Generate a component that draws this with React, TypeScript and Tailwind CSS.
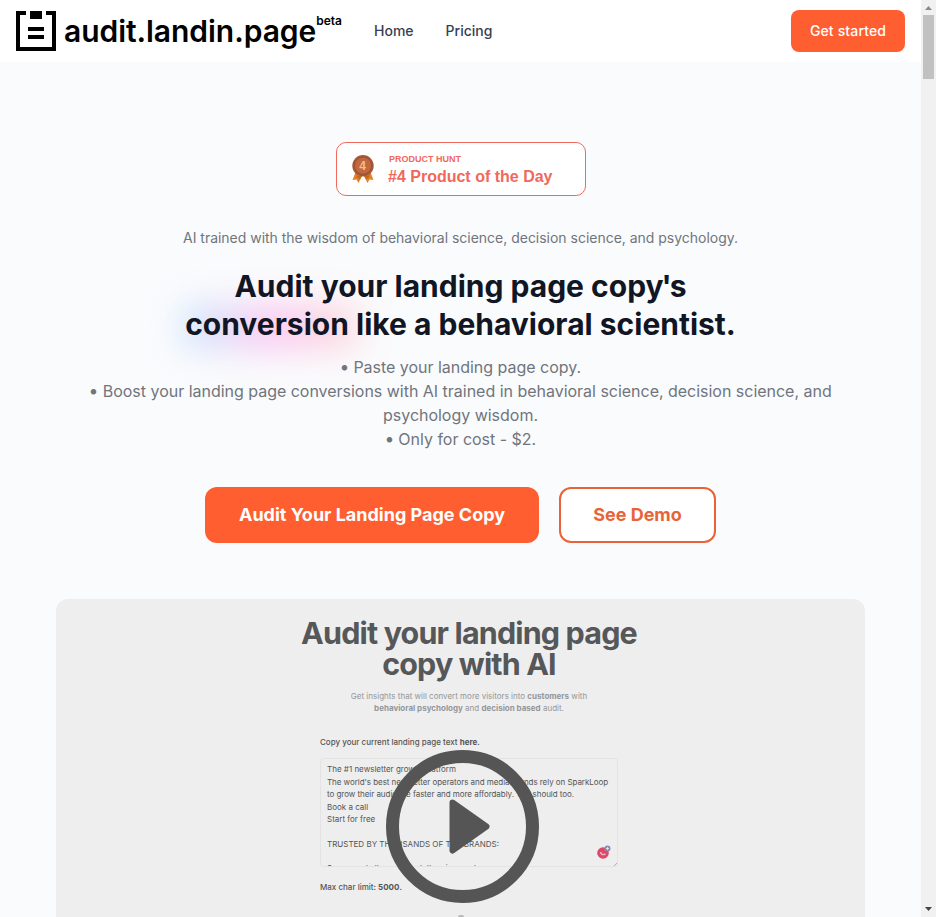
function Logo() {
  return (
    <a className="flex items-center">
      <svg className="h-10 w-10" viewBox="0 0 40 40" shapeRendering="crispEdges">
        <path d="M10 0H0v40h40V0H30v4h6v32H4V4h6z" />
        <path d="M14 0h12v8H14zM12 16h16v4H12zM12 24h16v4H12z" />
      </svg>
      <span className="ml-2 text-[30px] leading-9 font-semibold tracking-[-0.045px] text-black">audit.landin.page</span>
      <span className="-mt-5 text-[12px] leading-4 font-semibold text-black">beta</span>
    </a>
  );
}

function Header() {
  return (
    <header className="flex h-[62px] shrink-0 items-center bg-white pr-4 pl-4">
      <Logo />
      <nav className="ml-8 flex gap-8 text-sm font-medium text-gray-700">
        <a>Home</a>
        <a>Pricing</a>
      </nav>
      <button className="ml-auto h-[42px] w-[114px] rounded-lg bg-[#ff5e30] text-sm font-medium tracking-[0.01em] text-white">
        Get started
      </button>
    </header>
  );
}

function Medal() {
  return (
    <svg className="-ml-[0.500px] h-7 w-[22px]" viewBox="0 0 22 28">
      <path d="M4 16 0.500 25l4-.500L6.500 28l4-8h1l4 8 2-3.500 4 .5L18 16z" fill="#e58225" />
      <path d="m4 20 3 1 3-.5-2 4-3-2zm14 0-3 1-3-.5 2 4 3-2z" fill="#c06a22" />
      <circle cx="11" cy="10.700" r="10.700" fill="#a4583a" />
      <circle cx="11" cy="10.700" r="8.500" fill="#c0693f" stroke="#9a4f33" strokeWidth=".8" />
      <text x="10.700" y="14.800" textAnchor="middle" fontSize="12" fontWeight="700" fill="#f7b98c" fontFamily="Liberation Sans, sans-serif">4</text>
    </svg>
  );
}

function ProductHunt() {
  return (
    <div className="flex h-[54px] w-[250px] items-center rounded-[10px] border border-[#f0695c] bg-white pl-4 font-['Liberation_Sans',sans-serif] font-bold text-[#f0695c]">
      <Medal />
      <div className="ml-[14px]">
        <div className="ml-px pt-[2px] text-[9px] leading-[12px]">PRODUCT HUNT</div>
        <div className="text-[16px] leading-[23px]">#4 Product of the Day</div>
      </div>
    </div>
  );
}

function Scrollbar() {
  return (
    <div className="flex w-[15px] shrink-0 flex-col items-center bg-[#f1f1f1]">
      <svg className="h-[15px] w-[15px]" viewBox="0 0 15 15"><path d="M4 10h7L7.500 6z" fill="#8b8b8b" /></svg>
      <div className="h-16 w-[11px] bg-[#c1c1c1]" />
      <svg className="mt-auto h-[15px] w-[15px]" viewBox="0 0 15 15"><path d="M4 5h7L7.500 9z" fill="#444" /></svg>
    </div>
  );
}

function Bullet() {
  return <span className="inline-block -translate-y-px scale-110">•</span>;
}

function PlayIcon() {
  return (
    <svg className="absolute top-[151px] left-[330px] h-[153px] w-[153px]" viewBox="0 0 153 153">
      <circle cx="76.500" cy="76.500" r="70" fill="none" stroke="#555" strokeWidth="13" />
      <path d="M66.500 52.500 100.500 76.500 66.500 100.500z" fill="#555" stroke="#555" strokeWidth="6" strokeLinejoin="round" />
    </svg>
  );
}

function Video() {
  return (
    <div className="relative h-[318px] w-[809px] overflow-hidden rounded-t-xl bg-[#eee] text-[#555]">
      <div className="ml-[264px] w-[298px] pt-[18px]">
        <h2 className="-mx-10 text-center text-[30.500px] leading-[31px] font-bold tracking-[-0.028em] text-[#555759]">
          Audit your landing page
          <br />
          copy with AI
        </h2>
        <p className="mt-[10.500px] text-center text-[8px] leading-[12.500px] text-[#94979a]">
          Get insights that will convert more visitors into <b className="font-bold">customers</b> with
          <br />
          <b className="font-bold">behavioral psychology</b> and <b className="font-bold">decision based</b> audit.
        </p>
        <p className="mt-[21.500px] text-[8px] leading-3 font-medium">
          Copy your current landing page text <b className="font-bold">here</b>.
        </p>
        <div className="mt-[10px] flex h-[109px] flex-col overflow-hidden rounded-sm border border-[#e3e3e3] pt-[4px] pl-[6px] text-[8px] leading-[12.500px] whitespace-nowrap">
          <span>The #1 newsletter growth platform</span>
          <span className="tracking-[-0.055px]">The world's best newsletter operators and media brands rely on SparkLoop</span>
          <span className="tracking-[-0.045px]">to grow their audience faster and more affordably. You should too.</span>
          <span>Book a call</span>
          <span>Start for free</span>
          <span className="mt-[12.500px]">TRUSTED BY THOUSANDS OF TOP BRANDS:</span>
          <span className="mt-[11.500px]">Sponsored all your newsletters in one day</span>
        </div>
        <p className="mt-[14px] text-[8px] leading-3 font-medium">
          Max char limit: <b className="font-bold">5000</b>.
        </p>
      </div>
      <svg className="absolute top-[245px] left-[540px] h-6 w-6" viewBox="0 0 24 24">
        <circle cx="7" cy="9" r="5.800" fill="#dc4867" />
        <path d="M4.500 8q1 4 5 2" fill="none" stroke="#f1b3c0" strokeWidth="1.400" />
        <circle cx="11.500" cy="4.500" r="3" fill="#8c8bb5" />
        <path d="M11.500 3v3M10 4.500h3" stroke="#eee" strokeWidth=".8" />
        <path d="m18 22 3-3" stroke="#999" strokeWidth=".7" />
      </svg>
      <PlayIcon />
      <div className="absolute top-[316px] left-[402px] h-[2px] w-[6px] rounded-t-full bg-[#b9b9b9]" />
    </div>
  );
}

export default function App() {
  return (
    <div className="flex h-[917px] w-[936px] overflow-hidden bg-[#fafbfd] font-['Inter',sans-serif]">
      <div className="flex w-[921px] flex-col">
        <Header />
        <main className="flex flex-col items-center pt-20">
          <ProductHunt />
          <p className="mt-8 text-sm tracking-[-0.018px] text-[#70757c]">
            AI trained with the wisdom of behavioral science, decision science, and psychology.
          </p>
          <h1 className="mt-[19px] text-center text-[30px] leading-[38px] font-bold text-[#111625]">
            <span className="relative z-10">
              Audit your landing page copy<span className="-mx-[2px]">'</span>s
            </span>
            <br />
            <span className="relative">
              <span className="absolute top-0 right-[-8px] bottom-[-6px] left-0 bg-linear-to-r from-[#60c0ff] via-[#ff70e1] to-[#ffa09b] opacity-40 blur-[18px]" />
              <span className="relative">conversion</span>
            </span>
            <span className="relative"> like a behavioral scientist.</span>
          </h1>
          <p className="mt-3 w-[768px] text-center text-base tracking-[-0.02px] text-[#70757c]">
            <Bullet /> Paste your landing page copy.
            <br />
            <Bullet /> Boost your landing page conversions with AI trained in behavioral science, decision science, and
            <br />
            psychology wisdom.
            <br />
            <Bullet /> Only for cost - $2.
          </p>
          <div className="mt-9 mb-14 flex gap-5 text-lg font-bold">
            <button className="h-14 w-[334px] rounded-xl bg-[#ff5e30] text-white">Audit Your Landing Page Copy</button>
            <button className="h-14 w-[157px] rounded-xl border-2 border-[#ea6338] bg-white text-[#ea6338]">See Demo</button>
          </div>
          <Video />
        </main>
      </div>
      <Scrollbar />
    </div>
  );
}
